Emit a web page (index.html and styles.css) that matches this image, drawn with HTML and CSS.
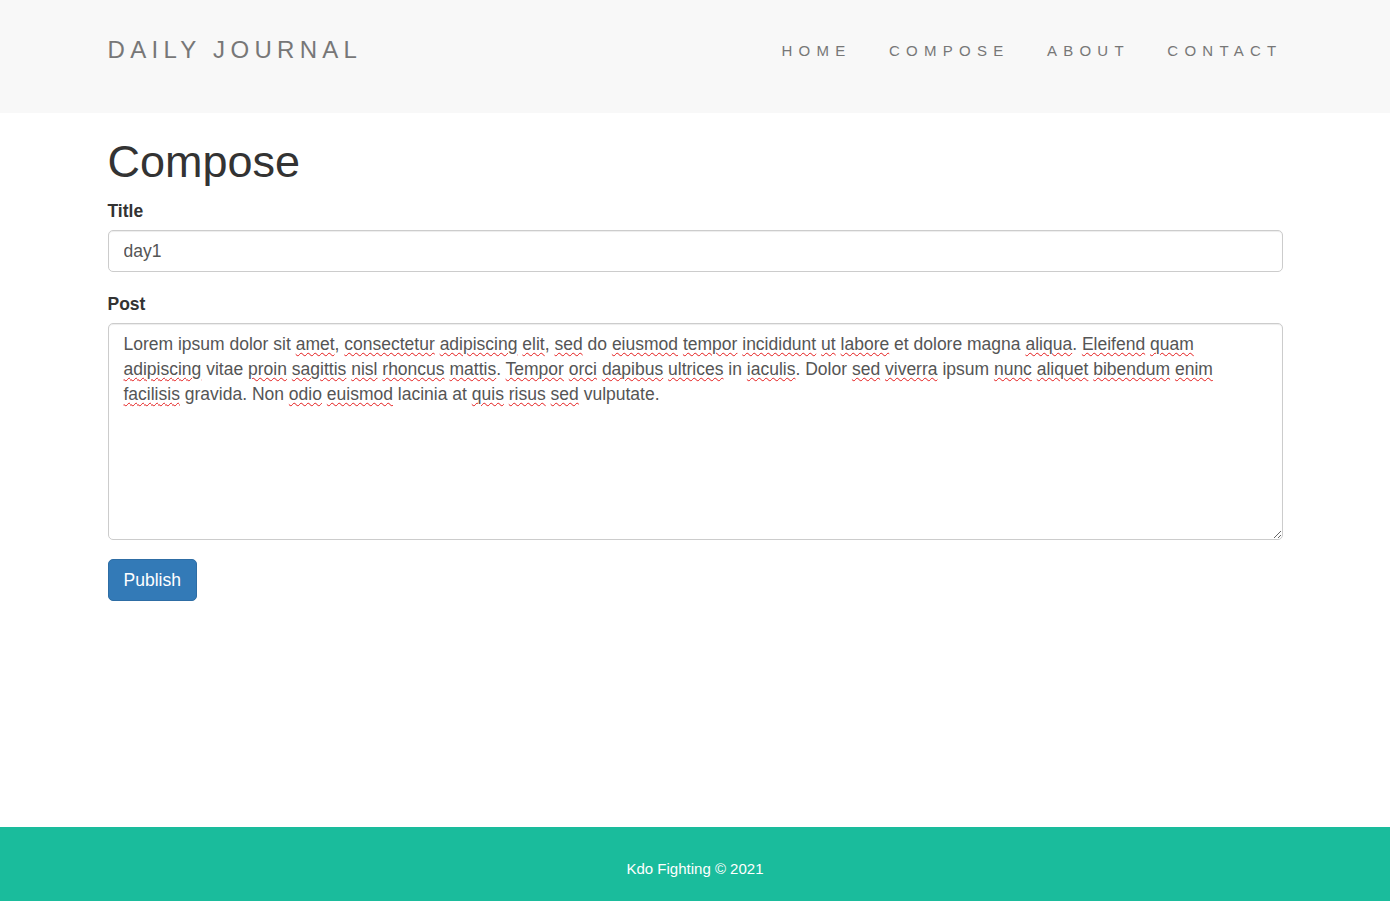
FILE: index.html
```html
<!DOCTYPE html>
<html lang="en">
<head>
<meta charset="utf-8">
<title>Daily Journal</title>
<link rel="stylesheet" href="styles.css">
</head>
<body>
<header class="navbar">
  <div class="container nav-inner">
    <a class="brand" href="#">DAILY JOURNAL</a>
    <ul class="nav-links">
      <li><a href="#">HOME</a></li>
      <li><a href="#">COMPOSE</a></li>
      <li><a href="#">ABOUT</a></li>
      <li><a href="#">CONTACT</a></li>
    </ul>
  </div>
</header>
<main class="container main">
  <h1 class="page-title">Compose</h1>
  <form class="compose-form">
    <div class="form-group form-group-title">
      <label class="field-label" for="title">Title</label>
      <input class="form-control" id="title" type="text" value="day1" spellcheck="false">
    </div>
    <div class="form-group">
      <label class="field-label">Post</label>
      <div class="form-control post-box" role="textbox" aria-multiline="true">Lorem ipsum dolor sit <span class="sp">amet</span>, <span class="sp">consectetur</span> <span class="sp">adipiscing</span> <span class="sp">elit</span>, <span class="sp">sed</span> do <span class="sp">eiusmod</span> <span class="sp">tempor</span> <span class="sp">incididunt</span> <span class="sp">ut</span> <span class="sp">labore</span> et dolore magna <span class="sp">aliqua</span>. <span class="sp">Eleifend</span> <span class="sp">quam</span> <span class="sp">adipiscing</span> vitae <span class="sp">proin</span> <span class="sp">sagittis</span> <span class="sp">nisl</span> <span class="sp">rhoncus</span> <span class="sp">mattis</span>. <span class="sp">Tempor</span> <span class="sp">orci</span> <span class="sp">dapibus</span> <span class="sp">ultrices</span> in <span class="sp">iaculis</span>. Dolor <span class="sp">sed</span> <span class="sp">viverra</span> ipsum <span class="sp">nunc</span> <span class="sp">aliquet</span> <span class="sp">bibendum</span> <span class="sp">enim</span> <span class="sp">facilisis</span> gravida. Non <span class="sp">odio</span> <span class="sp">euismod</span> lacinia at <span class="sp">quis</span> <span class="sp">risus</span> <span class="sp">sed</span> vulputate.</div>
    </div>
    <button class="btn-publish" type="button">Publish</button>
  </form>
</main>
<footer class="footer">
  <p class="footer-text">Kdo Fighting © 2021</p>
</footer>
</body>
</html>
```
FILE: styles.css
```css
* { box-sizing: border-box; }

html, body { height: 100%; }

body {
  margin: 0;
  font-family: "Liberation Sans", Arial, Helvetica, sans-serif;
  font-size: 17.5px;
  line-height: 25px;
  color: #333;
  background: #fff;
  display: flex;
  flex-direction: column;
  min-height: 100vh;
}

.container {
  width: 1175px;
  margin: 0 auto;
}

/* Navbar */
.navbar {
  background: #f8f8f8;
  height: 113px;
  flex: none;
}

.nav-inner {
  display: flex;
  justify-content: space-between;
  align-items: flex-start;
}

.brand {
  padding-top: 38px;
  font-size: 24px;
  line-height: 24px;
  letter-spacing: 5.3px;
  color: #777;
  text-decoration: none;
}

.nav-links {
  list-style: none;
  margin: 0 -18.75px 0 0;
  padding: 41px 0 0;
  display: flex;
}

.nav-links a {
  display: block;
  padding: 0 18.75px;
  font-size: 15px;
  line-height: 20px;
  letter-spacing: 6.25px;
  color: #777;
  text-decoration: none;
}

/* Main */
.main {
  flex: 1 0 auto;
}

.page-title {
  margin: 23.5px 0 12.5px;
  font-size: 45px;
  line-height: 49.5px;
  font-weight: 500;
  color: #333;
}

.form-group {
  margin-bottom: 18.75px;
}

.form-group-title {
  margin-bottom: 19.75px;
}

.field-label {
  display: block;
  margin-bottom: 6.25px;
  font-weight: 700;
  line-height: 25px;
}

.form-control {
  display: block;
  width: 100%;
  height: 42.5px;
  padding: 7.5px 15px;
  font-family: inherit;
  font-size: 17.5px;
  line-height: 25px;
  color: #555;
  background: #fff;
  border: 1px solid #ccc;
  border-radius: 5px;
  box-shadow: inset 0 1px 1px rgba(0, 0, 0, 0.075);
}

.post-box {
  height: 216.5px;
  overflow: auto;
  resize: vertical;
}

.sp {
  text-decoration: underline wavy #e41b1b;
  text-decoration-thickness: 1px;
  text-underline-offset: 1.5px;
}

.btn-publish {
  display: block;
  padding: 8.5px 15px 6.5px;
  font-family: inherit;
  font-size: 17.5px;
  line-height: 25px;
  color: #fff;
  background: #337ab7;
  border: 1px solid #2e6da4;
  border-radius: 5px;
}

/* Footer */
.footer {
  flex: none;
  height: 74px;
  background: #1abc9c;
  display: flex;
  align-items: center;
  justify-content: center;
}

.footer-text {
  margin: 0;
  padding-top: 9px;
  font-size: 15px;
  line-height: 20px;
  color: #fff;
}
```
